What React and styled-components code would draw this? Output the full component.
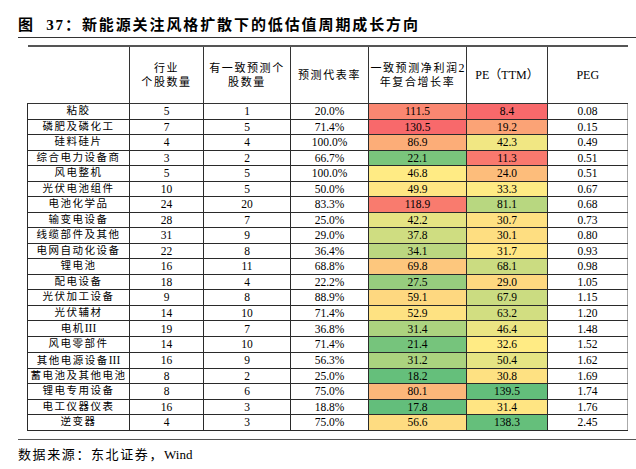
import React from "react";
import styled, { createGlobalStyle } from "styled-components";

const GlobalStyle = createGlobalStyle`
  html, body { margin: 0; padding: 0; background: #fff; }
  body { font-family: "Liberation Serif", "Noto Sans CJK SC", serif; color: #000; }
`;

const rows = [
  ["粘胶", 5, 1, "20.0%", 111.5, 8.4, "0.08"],
  ["磷肥及磷化工", 7, 5, "71.4%", 130.5, 19.2, "0.15"],
  ["硅料硅片", 4, 4, "100.0%", 86.9, 42.3, "0.49"],
  ["综合电力设备商", 3, 2, "66.7%", 22.1, 11.3, "0.51"],
  ["风电整机", 5, 5, "100.0%", 46.8, 24.0, "0.51"],
  ["光伏电池组件", 10, 5, "50.0%", 49.9, 33.3, "0.67"],
  ["电池化学品", 24, 20, "83.3%", 118.9, 81.1, "0.68"],
  ["输变电设备", 28, 7, "25.0%", 42.2, 30.7, "0.73"],
  ["线缆部件及其他", 31, 9, "29.0%", 37.8, 30.1, "0.80"],
  ["电网自动化设备", 22, 8, "36.4%", 34.1, 31.7, "0.93"],
  ["锂电池", 16, 11, "68.8%", 69.8, 68.1, "0.98"],
  ["配电设备", 18, 4, "22.2%", 27.5, 29.0, "1.05"],
  ["光伏加工设备", 9, 8, "88.9%", 59.1, 67.9, "1.15"],
  ["光伏辅材", 14, 10, "71.4%", 52.9, 63.2, "1.20"],
  ["电机", 19, 7, "36.8%", 31.4, 46.4, "1.48", "III"],
  ["风电零部件", 14, 10, "71.4%", 21.4, 32.6, "1.52"],
  ["其他电源设备", 16, 9, "56.3%", 31.2, 50.4, "1.62", "III"],
  ["蓄电池及其他电池", 8, 2, "25.0%", 18.2, 30.8, "1.69"],
  ["锂电专用设备", 8, 6, "75.0%", 80.1, 139.5, "1.74"],
  ["电工仪器仪表", 16, 3, "18.8%", 17.8, 31.4, "1.76"],
  ["逆变器", 4, 3, "75.0%", 56.6, 138.3, "2.45"],
];

const GREEN = [99, 190, 123];
const YELLOW = [255, 235, 132];
const RED = [248, 105, 107];

const mix = (a, b, t) =>
  `rgb(${a.map((v, i) => Math.round(v + (b[i] - v) * t)).join(",")})`;

function scale(values, lowColor, highColor) {
  const sorted = [...values].sort((a, b) => a - b);
  const min = sorted[0];
  const max = sorted[sorted.length - 1];
  const mid = sorted[Math.floor(sorted.length / 2)];
  return (v) =>
    v <= mid
      ? mix(lowColor, YELLOW, (v - min) / (mid - min))
      : mix(YELLOW, highColor, (v - mid) / (max - mid));
}

const growthColor = scale(rows.map((r) => r[4]), GREEN, RED);
const peColor = scale(rows.map((r) => r[5]), RED, GREEN);

const Page = styled.div`
  width: 636px;
  height: 469px;
  overflow: hidden;
`;

const TitleBar = styled.div`
  margin-left: 18px;
  height: 28px;
  padding-top: 9px;
  display: flex;
  align-items: center;
  border-bottom: 1.5px solid #333;
  font-family: "Liberation Serif", "Noto Sans CJK SC", serif;
  font-weight: 700;
  font-size: 15px;
  letter-spacing: 1.9px;
  white-space: pre;
`;

const TableWrap = styled.div`
  margin-top: 7px;
  margin-left: 27px;
`;

const Table = styled.table`
  border-collapse: collapse;
  table-layout: fixed;
  width: 600px;
  font-family: "Liberation Serif", "Noto Sans CJK SC", serif;
`;

const HeadCell = styled.th`
  height: 56px;
  padding: 0;
  font-weight: 400;
  font-size: 11px;
  letter-spacing: 1.6px;
  line-height: 14px;
  text-align: center;
  vertical-align: middle;
  border-top: 2px solid #555;
  border-left: ${(p) => (p.$first ? "none" : "1.5px solid #333")};
  border-bottom: 1px solid #333;
  &:last-child { letter-spacing: 0; font-size: 12px; }
`;

const Latin = styled.span`
  font-size: ${(p) => p.$size || "12px"};
  letter-spacing: 0;
`;

const Cell = styled.td`
  height: 14.5px;
  padding: 0;
  text-align: center;
  vertical-align: middle;
  font-size: 11.5px;
  line-height: 14px;
  background: ${(p) => p.$bg || "#fff"};
  border: 1px solid #2a2a2a;
  border-left-width: ${(p) => (p.$thick ? "1.5px" : "1px")};
  border-right-color: ${(p) => (p.$last ? "#aaa" : "#2a2a2a")};
  white-space: nowrap;
`;

const NameCell = styled(Cell)`
  font-size: 10.5px;
  letter-spacing: 1.5px;
`;

const Footer = styled.div`
  margin-top: 8px;
  margin-left: 18px;
  border-top: 1.5px solid #555;
  padding-top: 6px;
  font-size: 13px;
  letter-spacing: 1.6px;
  line-height: 17px;
`;

const cols = [102, 74, 87, 78, 98, 81, 80];

export default function App() {
  return (
    <Page>
      <GlobalStyle />
      <TitleBar>{"图  37：新能源关注风格扩散下的低估值周期成长方向"}</TitleBar>
      <TableWrap>
        <Table>
          <colgroup>
            {cols.map((w, i) => (
              <col key={i} style={{ width: w }} />
            ))}
          </colgroup>
          <thead>
            <tr>
              <HeadCell $first />
              <HeadCell>
                行业
                <br />
                个股数量
              </HeadCell>
              <HeadCell>
                有一致预测个
                <br />
                股数量
              </HeadCell>
              <HeadCell>预测代表率</HeadCell>
              <HeadCell>
                一致预测净利润<Latin>2</Latin>
                <br />
                年复合增长率
              </HeadCell>
              <HeadCell>
                <Latin>PE（TTM）</Latin>
              </HeadCell>
              <HeadCell>PEG</HeadCell>
            </tr>
          </thead>
          <tbody>
            {rows.map((r) => (
              <tr key={r[0]}>
                <NameCell>
                  {r[0]}
                  {r[7] && <Latin $size="11.5px">{r[7]}</Latin>}
                </NameCell>
                <Cell>{r[1]}</Cell>
                <Cell>{r[2]}</Cell>
                <Cell>{r[3]}</Cell>
                <Cell $thick $bg={growthColor(r[4])}>
                  {r[4].toFixed(1)}
                </Cell>
                <Cell $thick $bg={peColor(r[5])}>
                  {r[5].toFixed(1)}
                </Cell>
                <Cell $thick $last>
                  {r[6]}
                </Cell>
              </tr>
            ))}
          </tbody>
        </Table>
      </TableWrap>
      <Footer>
        数据来源：东北证券，<Latin $size="13px">Wind</Latin>
      </Footer>
    </Page>
  );
}
